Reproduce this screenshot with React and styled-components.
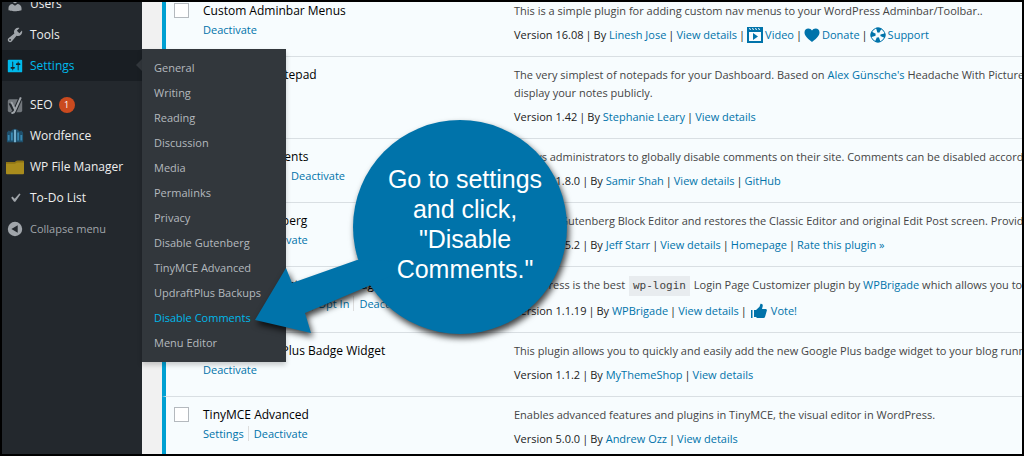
import React from 'react';
import styled, { createGlobalStyle } from 'styled-components';

const GlobalStyle = createGlobalStyle`
	* {
		box-sizing: border-box;
	}

	body {
		margin: 0;
		background: #000;
		font-family: 'Open Sans', 'Noto Sans', sans-serif;
		font-size: 11px;
		line-height: 18px;
		color: #222;
	}

	a {
		color: #0073aa;
		text-decoration: none;
	}

	ul {
		list-style: none;
		margin: 0;
		padding: 0;
	}
`;

const Frame = styled.div`
	position: relative;
	display: flex;
	height: 100vh;
	border: 2px solid #000;
	background: #f1f1f1;
	overflow: hidden;
`;

const Sidebar = styled.nav`
	position: relative;
	z-index: 1;
	flex: 0 0 140px;
	background: #23282d;
`;

const MenuList = styled.ul`
	margin-top: -14px;
`;

const MenuItem = styled.li`
	position: relative;
	margin-top: ${({ $spaced }) => ($spaced ? '8px' : '0')};
	background: ${({ $current }) => ($current ? '#191e23' : 'transparent')};
`;

const MenuLink = styled.a`
	display: flex;
	align-items: center;
	gap: 6px;
	height: 31px;
	padding-left: 4px;
	font-size: 12px;
	white-space: nowrap;
	color: ${({ $current }) => ($current ? '#00b9eb' : '#eee')};
`;

const CollapseButton = styled.button`
	display: flex;
	align-items: center;
	gap: 6px;
	width: 100%;
	height: 31px;
	padding: 0 0 0 4px;
	border: 0;
	background: none;
	font-family: inherit;
	font-size: 11px;
	color: #a0a5aa;
`;

const MenuIcon = styled.svg`
	flex: none;
	width: 18px;
	height: 18px;
	fill: ${({ $current }) => ($current ? '#00b9eb' : '#a0a5aa')};
`;

const Badge = styled.span`
	width: 16px;
	height: 16px;
	border-radius: 50%;
	background: #ca4a1f;
	color: #fff;
	font-size: 9px;
	line-height: 16px;
	text-align: center;
`;

const Pointer = styled.span`
	position: absolute;
	top: 9px;
	right: 0;
	border: 6px solid transparent;
	border-left-width: 0;
	border-right-color: #32373c;
`;

const Submenu = styled.ul`
	position: absolute;
	top: -1px;
	left: 100%;
	width: 144px;
	padding: 6px 0 7px;
	background: #32373c;
	box-shadow: 0 3px 5px rgba(0, 0, 0, 0.2);
`;

const SubmenuLink = styled.a`
	display: block;
	padding-left: 12px;
	line-height: 25px;
	white-space: nowrap;
	color: ${({ $current }) => ($current ? '#00b9eb' : '#b4b9be')};
`;

const Content = styled.main`
	flex: 1;
	min-width: 0;
	padding-left: 20px;
	overflow: hidden;
`;

const PluginTable = styled.table`
	width: 100%;
	margin-top: -9px;
	border-collapse: separate;
	border-spacing: 0;
	table-layout: fixed;
	background: #f7fcfe;
`;

const Cell = styled.td`
	padding: 9px 0 12px;
	border-bottom: 1px solid #d9dfe3;
	vertical-align: top;
	text-align: left;
	white-space: nowrap;
`;

const CheckCell = styled(Cell)`
	width: 41px;
	padding: 10px 0 0 8px;
	border-left: 4px solid #00a0d2;
	line-height: 0;
`;

const NameCell = styled(Cell)`
	width: 311px;
	font-weight: 400;
`;

const Checkbox = styled.input`
	appearance: none;
	width: 15px;
	height: 15px;
	margin: 0;
	border: 1px solid #b4b9be;
	background: #fff;
`;

const PluginName = styled.label`
	display: block;
	font-weight: 500;
	font-size: 12px;
	color: #000;
`;

const Actions = styled.div`
	margin-top: 1px;

	a + a {
		margin-left: 4px;
		padding-left: 5px;
		border-left: 1px solid #ddd;
	}
`;

const Description = styled.p`
	margin: 0 0 6px;
	color: #444;
`;

const Meta = styled.div`
	display: flex;
	align-items: center;
	gap: 2px;
	height: 18px;
`;

const IconLink = styled.a`
	display: flex;
	align-items: center;
	gap: ${({ $gap }) => $gap || 2}px;
	padding-left: ${({ $gap }) => ($gap ? '2px' : '0')};
`;

const MetaIcon = styled.svg`
	width: 16px;
	height: 16px;
	fill: #0073aa;
`;

const Code = styled.code`
	display: inline-block;
	margin: 0 1px;
	padding: 0 4px;
	background: #e8ecef;
	font-family: 'DejaVu Sans Mono', monospace;
	font-size: 11px;
	line-height: 20px;
`;

const Callout = styled.aside`
	position: absolute;
	z-index: 2;
	top: 116px;
	left: 248px;
	width: 330px;
	height: 230px;
`;

const CalloutShape = styled.svg`
	display: block;
	fill: #0073aa;
	filter: drop-shadow(2px 4px 3px rgba(0, 0, 0, 0.75));
`;

const CalloutText = styled.p`
	position: absolute;
	top: 46px;
	left: 125px;
	width: 180px;
	margin: 0;
	color: #fff;
	font-family: 'Liberation Sans', Arial, sans-serif;
	font-size: 25px;
	line-height: 30px;
	text-align: center;
`;

const icons = {
	users: (
		<path d="M10 9.25c-2.27 0-2.73-3.44-2.73-3.44C7 4.02 7.82 2 9.97 2c2.16 0 2.98 2.02 2.71 3.81 0 0-.41 3.44-2.68 3.44zm0 2.57L12.72 10c2.39 0 4.52 2.33 4.52 4.53v2.49s-3.65 1.13-7.24 1.13c-3.65 0-7.24-1.13-7.24-1.13v-2.49c0-2.25 1.94-4.48 4.47-4.48z" />
	),
	tools: (
		<path d="M16.68 9.77c-1.34 1.34-3.3 1.67-4.95.99l-5.41 6.52c-.99.99-2.59.99-3.58 0s-.99-2.59 0-3.57l6.52-5.42c-.68-1.65-.35-3.61.99-4.95 1.28-1.28 3.12-1.62 4.72-1.06l-2.89 2.89 2.82 2.82 2.86-2.87c.53 1.58.18 3.39-1.08 4.65zM3.81 16.21c.4.39 1.04.39 1.43 0 .4-.4.4-1.04 0-1.43-.39-.4-1.03-.4-1.43 0-.39.39-.39 1.03 0 1.43z" />
	),
	settings: (
		<path d="M18 16V4c0-.55-.45-1-1-1H3c-.55 0-1 .45-1 1v12c0 .55.45 1 1 1h14c.55 0 1-.45 1-1zM8 11h1c.55 0 1 .45 1 1s-.45 1-1 1H8v1.500c0 .28-.22.5-.5.5s-.5-.22-.5-.5V13H6c-.55 0-1-.45-1-1s.45-1 1-1h1V5.500c0-.28.22-.5.5-.5s.5.22.5.5V11zm5-2h-1c-.55 0-1-.45-1-1s.45-1 1-1h1V5.500c0-.28.22-.5.5-.5s.5.22.5.5V7h1c.55 0 1 .45 1 1s-.45 1-1 1h-1v5.500c0 .28-.22.5-.5.5s-.5-.22-.5-.5V9z" />
	),
	seo: (
		<>
			<rect x="2" y="3.500" width="16" height="14.500" rx="2" fill="#72777c" />
			<path
				d="M5 7.500l4 8M16.500 1.500L9.800 16.500Q8.800 19 6 19"
				fill="none"
				stroke="#23282d"
				strokeWidth="4.500"
			/>
			<path
				d="M5 7.500h1.500l3.500 7.500M16.500 1.500L9.800 16.500Q8.800 19 6 19"
				fill="none"
				stroke="#a0a5aa"
				strokeWidth="2.200"
			/>
		</>
	),
	wordfence: (
		<g>
			<path
				d="M1 6l2-2 2 1 2-2 3-1 3 1 2 2 2-1 2 2v11H1z"
				fill="#1f4f6b"
			/>
			<path d="M2 9h2v6H2zM5.500 6h2v9h-2zM12.500 6h2v9h-2zM16 9h2v6h-2z" fill="#3787b0" />
			<path d="M9 3h2v14H9z" fill="#7fb9d6" />
		</g>
	),
	folder: (
		<g>
			<path d="M0 4.500h10l2-1.500h7q1 0 1 1v13q0 1-1 1H1q-1 0-1-1z" fill="#a98c1d" />
			<path d="M0 4.500h10l2-1.500h7q1 0 1 1v1h-8l-2 1.500H0z" fill="#8f7415" />
		</g>
	),
	check: (
		<path d="M14.830 4.890l1.340.940-5.810 8.380H9.020L5.780 9.670l1.340-1.250 2.570 2.400z" />
	),
	collapse: (
		<path
			fillRule="evenodd"
			d="M10 2a8 8 0 1 0 0 16 8 8 0 0 0 0-16zm3 3.800v8.400L6 10z"
		/>
	),
};

const linkIcons = {
	video: (
		<path
			fillRule="evenodd"
			d="M0 0h16v16H0zM2 5v9h12V5zM2 1l1 2h1L3 1zm3 0l1 2h1L6 1zm3 0l1 2h1L9 1zm3 0l1 2h1l-1-2zM6 6l5 3.500L6 13z"
		/>
	),
	heart: (
		<path d="M8 15C5 12.500.5 9.500.5 5.500.5 3 2.200 1.500 4.300 1.500 6 1.500 7.300 2.300 8 3.600c.7-1.300 2-2.100 3.700-2.100 2.100 0 3.800 1.500 3.800 4C15.500 9.500 11 12.500 8 15z" />
	),
	support: (
		<>
			<circle cx="8" cy="8" r="7" fill="none" stroke="#0073aa" strokeWidth="1" />
			<circle
				cx="8"
				cy="8"
				r="5"
				fill="none"
				stroke="#0073aa"
				strokeWidth="5"
				strokeDasharray="4 3.850"
				strokeDashoffset="2"
			/>
		</>
	),
	thumb: (
		<path d="M0 7h1.500v8H0zm3 0h2l3.500-3.200L9.500.8c1.600-.3 2.500.8 2.200 2.400L11 6h4q1.300.5.700 2l-1.700 6q-.4 1-1.500 1H6l-1-1H3z" />
	),
};

const menu = [
	{ icon: 'users', label: 'Users' },
	{ icon: 'tools', label: 'Tools' },
	{ icon: 'settings', label: 'Settings', current: true },
	{ icon: 'seo', label: 'SEO', badge: 1, spaced: true },
	{ icon: 'wordfence', label: 'Wordfence' },
	{ icon: 'folder', label: 'WP File Manager' },
	{ icon: 'check', label: 'To-Do List' },
];

const submenu = [
	'General',
	'Writing',
	'Reading',
	'Discussion',
	'Media',
	'Permalinks',
	'Privacy',
	'Disable Gutenberg',
	'TinyMCE Advanced',
	'UpdraftPlus Backups',
	'Disable Comments',
	'Menu Editor',
];

const plugins = [
	{
		name: 'Custom Adminbar Menus',
		actions: ['Deactivate'],
		description:
			'This is a simple plugin for adding custom nav menus to your WordPress Adminbar/Toolbar..',
		version: '16.08',
		author: 'Linesh Jose',
		links: [
			{ label: 'View details' },
			{ label: 'Video', icon: 'video' },
			{ label: 'Donate', icon: 'heart' },
			{ label: 'Support', icon: 'support' },
		],
	},
	{
		name: 'Dashboard Notepad',
		actions: ['Deactivate'],
		description: (
			<>
				The very simplest of notepads for your Dashboard. Based on{' '}
				<a href="#alex">Alex Günsche's</a> Headache With Pictures
				<br />
				display your notes publicly.
			</>
		),
		version: '1.42',
		author: 'Stephanie Leary',
		links: [{ label: 'View details' }],
	},
	{
		name: 'Disable Comments',
		actions: ['Settings', 'Tools', 'Deactivate'],
		description:
			'Allows administrators to globally disable comments on their site. Comments can be disabled according to post type.',
		version: '1.8.0',
		author: 'Samir Shah',
		links: [{ label: 'View details' }, { label: 'GitHub' }],
	},
	{
		name: 'Disable Gutenberg',
		actions: ['Settings', 'Deactivate'],
		description:
			'Disables Gutenberg Block Editor and restores the Classic Editor and original Edit Post screen. Provides options',
		version: '1.5.2',
		author: 'Jeff Starr',
		links: [
			{ label: 'View details' },
			{ label: 'Homepage' },
			{ label: 'Rate this plugin »' },
		],
	},
	{
		name: 'LoginPress - Custom Login Page',
		actions: ['Settings', 'Customize', 'Opt In', 'Deactivate'],
		description: (
			<>
				LoginPress is the best <Code>wp-login</Code> Login Page Customizer plugin
				by <a href="#wpbrigade">WPBrigade</a> which allows you to completely
			</>
		),
		version: '1.1.19',
		author: 'WPBrigade',
		links: [
			{ label: 'View details' },
			{ label: 'Vote!', icon: 'thumb', gap: 4 },
		],
	},
	{
		name: 'Super Google Plus Badge Widget',
		actions: ['Deactivate'],
		description:
			'This plugin allows you to quickly and easily add the new Google Plus badge widget to your blog running',
		version: '1.1.2',
		author: 'MyThemeShop',
		links: [{ label: 'View details' }],
	},
	{
		name: 'TinyMCE Advanced',
		actions: ['Settings', 'Deactivate'],
		description:
			'Enables advanced features and plugins in TinyMCE, the visual editor in WordPress.',
		version: '5.0.0',
		author: 'Andrew Ozz',
		links: [{ label: 'View details' }],
	},
];

const SidebarItem = ({ icon, label, badge, current, spaced }) => {
	return (
		<MenuItem $current={current} $spaced={spaced}>
			<MenuLink href="#menu" $current={current}>
				<MenuIcon viewBox="0 0 20 20" $current={current} aria-hidden="true">
					{icons[icon]}
				</MenuIcon>
				{label}
				{badge && <Badge>{badge}</Badge>}
			</MenuLink>
			{current && (
				<>
					<Pointer />
					<Submenu>
						{submenu.map((item) => (
							<li key={item}>
								<SubmenuLink
									href="#submenu"
									$current={item === 'Disable Comments'}
								>
									{item}
								</SubmenuLink>
							</li>
						))}
					</Submenu>
				</>
			)}
		</MenuItem>
	);
};

const PluginRow = ({ id, name, actions, description, version, author, links }) => {
	return (
		<tr>
			<CheckCell>
				<Checkbox type="checkbox" id={id} />
			</CheckCell>
			<NameCell as="th" scope="row">
				<PluginName htmlFor={id}>{name}</PluginName>
				<Actions>
					{actions.map((action) => (
						<a key={action} href="#action">
							{action}
						</a>
					))}
				</Actions>
			</NameCell>
			<Cell>
				<Description>{description}</Description>
				<Meta>
					<span>Version {version}</span>
					<span>|</span>
					<span>
						By <a href="#author">{author}</a>
					</span>
					{links.map(({ label, icon, gap }) => (
						<React.Fragment key={label}>
							<span>|</span>
							<IconLink href="#details" $gap={gap}>
								{icon && (
									<MetaIcon viewBox="0 0 16 16" aria-hidden="true">
										{linkIcons[icon]}
									</MetaIcon>
								)}
								{label}
							</IconLink>
						</React.Fragment>
					))}
				</Meta>
			</Cell>
		</tr>
	);
};

const App = () => {
	return (
		<>
			<GlobalStyle />
			<Frame>
				<Sidebar>
					<MenuList>
						{menu.map((item) => (
							<SidebarItem key={item.label} {...item} />
						))}
						<li>
							<CollapseButton type="button">
								<MenuIcon viewBox="0 0 20 20" aria-hidden="true">
									{icons.collapse}
								</MenuIcon>
								Collapse menu
							</CollapseButton>
						</li>
					</MenuList>
				</Sidebar>
				<Content>
					<PluginTable>
						<tbody>
							{plugins.map((plugin, i) => (
								<PluginRow key={plugin.name} id={`plugin-${i}`} {...plugin} />
							))}
						</tbody>
					</PluginTable>
				</Content>
				<Callout>
					<CalloutShape width="330" height="230" viewBox="250 118 330 230">
						<circle cx="460" cy="227" r="107" />
						<path d="M255 320L286 268L292 283L357 260L420 262L371 285L305 313L311 333z" />
					</CalloutShape>
					<CalloutText>Go to settings and click, "Disable Comments."</CalloutText>
				</Callout>
			</Frame>
		</>
	);
};

export default App;
